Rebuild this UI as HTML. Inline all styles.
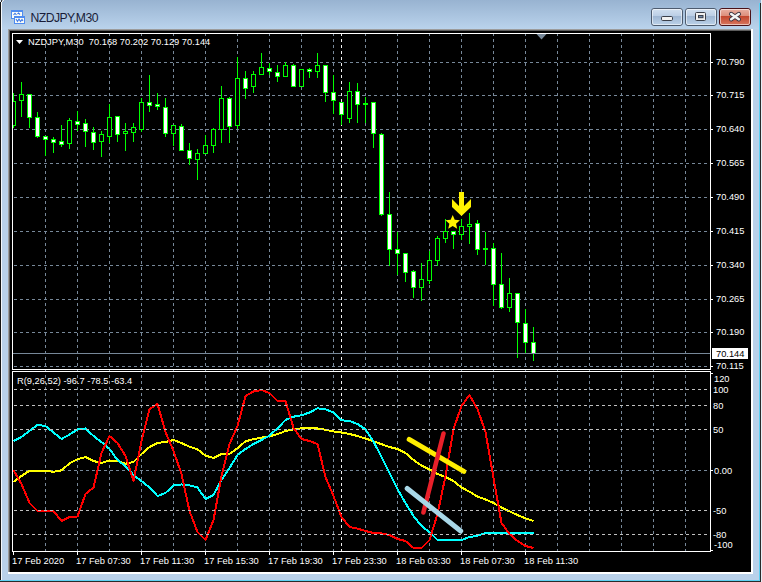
<!DOCTYPE html>
<html><head><meta charset="utf-8"><style>
html,body{margin:0;padding:0;background:#b9d1ea;overflow:hidden;}
svg{display:block;}
</style></head><body>
<svg width="762" height="582" viewBox="0 0 762 582">
<defs>
<linearGradient id="tb" x1="0" y1="0" x2="0" y2="1"><stop offset="0" stop-color="#98b3d1"/><stop offset="1" stop-color="#bad3ec"/></linearGradient>
<linearGradient id="btn" x1="0" y1="0" x2="0" y2="1"><stop offset="0" stop-color="#d3e1f0"/><stop offset="0.42" stop-color="#bccfe6"/><stop offset="0.43" stop-color="#9db5d2"/><stop offset="1" stop-color="#bdd3ea"/></linearGradient>
<linearGradient id="cbtn" x1="0" y1="0" x2="0" y2="1"><stop offset="0" stop-color="#eab3a6"/><stop offset="0.42" stop-color="#dd8f7c"/><stop offset="0.43" stop-color="#c1432a"/><stop offset="1" stop-color="#d97a62"/></linearGradient>
<clipPath id="cmain"><rect x="13" y="34" width="697" height="335"/></clipPath>
<clipPath id="csub"><rect x="13" y="372" width="697" height="179"/></clipPath>
</defs>
<rect x="0" y="0" width="762" height="582" fill="#b9d1ea" />
<rect x="0" y="0" width="762" height="29" fill="url(#tb)" />
<rect x="0" y="2" width="1" height="580" fill="#151515" />
<rect x="1" y="2" width="1" height="578" fill="#f4f8fc" />
<rect x="0" y="0" width="1" height="2" fill="#d4e4f4" />
<rect x="1" y="0" width="1" height="2" fill="#3a3a3a" />
<rect x="2" y="1" width="1" height="1" fill="#e8eef6" />
<rect x="3" y="0" width="1" height="1" fill="#e8e4e0" />
<rect x="760" y="3" width="1" height="579" fill="#2a2a2a" />
<rect x="759" y="3" width="1" height="577" fill="#5ed0f2" />
<rect x="761" y="0" width="1" height="582" fill="#e8eef6" />
<rect x="0" y="580" width="760" height="1" fill="#5ed0f2" />
<rect x="0" y="581" width="761" height="1" fill="#2a2a2a" />
<rect x="8" y="29" width="745" height="1" fill="#9c9c9c" />
<rect x="8" y="29" width="1" height="545" fill="#9c9c9c" />
<rect x="9" y="30" width="742" height="1" fill="#5c5c5c" />
<rect x="9" y="30" width="1" height="542" fill="#5c5c5c" />
<rect x="751" y="29" width="2" height="545" fill="#ffffff" />
<rect x="8" y="572" width="745" height="2" fill="#ffffff" />
<rect x="10" y="31" width="741" height="541" fill="#000000" />
<g shape-rendering="crispEdges">
<rect x="11" y="10" width="12" height="9" fill="#4f8cf0" />
<rect x="12" y="12" width="10" height="6" fill="#fdfdf6" />
<rect x="14" y="16" width="11" height="8" fill="#4f8cf0" />
<rect x="15" y="18" width="9" height="5" fill="#fdfdf6" />
</g>
<path d="M13.5 15 L15 13.3 L16.5 15 M17.5 14 L18.5 13 L20 14.5" stroke="#3f7ae8" fill="none" stroke-width="1.1"/>
<path d="M16 19 L17.5 21.5 L19 19 L20.5 21.5 L22 19.5 L23 21" stroke="#3f7ae8" fill="none" stroke-width="1.1"/>
<text x="30.5" y="21.8" font-family="'Liberation Sans', sans-serif" font-size="12.2" letter-spacing="-0.55" fill="#181c38">NZDJPY,M30</text>
<rect x="651.5" y="8.5" width="31" height="17" rx="2.5" fill="url(#btn)" stroke="#4d5b6e" stroke-width="1"/>
<rect x="652.5" y="9.5" width="29" height="15" rx="1.5" fill="none" stroke="rgba(255,255,255,0.55)" stroke-width="1"/>
<rect x="685.5" y="8.5" width="31" height="17" rx="2.5" fill="url(#btn)" stroke="#4d5b6e" stroke-width="1"/>
<rect x="686.5" y="9.5" width="29" height="15" rx="1.5" fill="none" stroke="rgba(255,255,255,0.55)" stroke-width="1"/>
<rect x="719.5" y="8.5" width="31" height="17" rx="2.5" fill="url(#cbtn)" stroke="#4a1218" stroke-width="1"/>
<rect x="720.5" y="9.5" width="29" height="15" rx="1.5" fill="none" stroke="rgba(255,255,255,0.55)" stroke-width="1"/>
<rect x="661.5" y="16.5" width="11" height="4" rx="1.2" fill="#f2f2f2" stroke="#3a3f4a" stroke-width="1"/>
<rect x="695.5" y="12.5" width="10" height="8" rx="1" fill="#f0f0f0" stroke="#3a3f4a" stroke-width="1"/>
<rect x="698.5" y="15.5" width="4.5" height="2.2" fill="#6f8aae" stroke="#3a3f4a" stroke-width="1"/>
<path d="M731.2 14 L738.8 19.2 M738.8 14 L731.2 19.2" stroke="#3a3440" stroke-width="4.4" stroke-linecap="round"/>
<path d="M731.2 14 L738.8 19.2 M738.8 14 L731.2 19.2" stroke="#f4f4f4" stroke-width="2.6" stroke-linecap="round"/>
<g shape-rendering="crispEdges">
<line x1="45.5" y1="369" x2="45.5" y2="551" stroke="#778899" stroke-dasharray="3 3"/>
<line x1="45.5" y1="33" x2="45.5" y2="369" stroke="#778899" stroke-dasharray="3 3"/>
<line x1="77.5" y1="369" x2="77.5" y2="551" stroke="#778899" stroke-dasharray="3 3"/>
<line x1="77.5" y1="33" x2="77.5" y2="369" stroke="#778899" stroke-dasharray="3 3"/>
<line x1="109.5" y1="369" x2="109.5" y2="551" stroke="#778899" stroke-dasharray="3 3"/>
<line x1="109.5" y1="33" x2="109.5" y2="369" stroke="#778899" stroke-dasharray="3 3"/>
<line x1="141.5" y1="369" x2="141.5" y2="551" stroke="#778899" stroke-dasharray="3 3"/>
<line x1="141.5" y1="33" x2="141.5" y2="369" stroke="#778899" stroke-dasharray="3 3"/>
<line x1="173.5" y1="369" x2="173.5" y2="551" stroke="#778899" stroke-dasharray="3 3"/>
<line x1="173.5" y1="33" x2="173.5" y2="369" stroke="#778899" stroke-dasharray="3 3"/>
<line x1="205.5" y1="369" x2="205.5" y2="551" stroke="#778899" stroke-dasharray="3 3"/>
<line x1="205.5" y1="33" x2="205.5" y2="369" stroke="#778899" stroke-dasharray="3 3"/>
<line x1="237.5" y1="369" x2="237.5" y2="551" stroke="#778899" stroke-dasharray="3 3"/>
<line x1="237.5" y1="33" x2="237.5" y2="369" stroke="#778899" stroke-dasharray="3 3"/>
<line x1="269.5" y1="369" x2="269.5" y2="551" stroke="#778899" stroke-dasharray="3 3"/>
<line x1="269.5" y1="33" x2="269.5" y2="369" stroke="#778899" stroke-dasharray="3 3"/>
<line x1="301.5" y1="369" x2="301.5" y2="551" stroke="#778899" stroke-dasharray="3 3"/>
<line x1="301.5" y1="33" x2="301.5" y2="369" stroke="#778899" stroke-dasharray="3 3"/>
<line x1="333.5" y1="369" x2="333.5" y2="551" stroke="#778899" stroke-dasharray="3 3"/>
<line x1="333.5" y1="33" x2="333.5" y2="369" stroke="#778899" stroke-dasharray="3 3"/>
<line x1="365.5" y1="369" x2="365.5" y2="551" stroke="#778899" stroke-dasharray="3 3"/>
<line x1="365.5" y1="33" x2="365.5" y2="369" stroke="#778899" stroke-dasharray="3 3"/>
<line x1="397.5" y1="369" x2="397.5" y2="551" stroke="#778899" stroke-dasharray="3 3"/>
<line x1="397.5" y1="33" x2="397.5" y2="369" stroke="#778899" stroke-dasharray="3 3"/>
<line x1="429.5" y1="369" x2="429.5" y2="551" stroke="#778899" stroke-dasharray="3 3"/>
<line x1="429.5" y1="33" x2="429.5" y2="369" stroke="#778899" stroke-dasharray="3 3"/>
<line x1="461.5" y1="369" x2="461.5" y2="551" stroke="#778899" stroke-dasharray="3 3"/>
<line x1="461.5" y1="33" x2="461.5" y2="369" stroke="#778899" stroke-dasharray="3 3"/>
<line x1="493.5" y1="369" x2="493.5" y2="551" stroke="#778899" stroke-dasharray="3 3"/>
<line x1="493.5" y1="33" x2="493.5" y2="369" stroke="#778899" stroke-dasharray="3 3"/>
<line x1="525.5" y1="369" x2="525.5" y2="551" stroke="#778899" stroke-dasharray="3 3"/>
<line x1="525.5" y1="33" x2="525.5" y2="369" stroke="#778899" stroke-dasharray="3 3"/>
<line x1="557.5" y1="369" x2="557.5" y2="551" stroke="#778899" stroke-dasharray="3 3"/>
<line x1="557.5" y1="33" x2="557.5" y2="369" stroke="#778899" stroke-dasharray="3 3"/>
<line x1="589.5" y1="369" x2="589.5" y2="551" stroke="#778899" stroke-dasharray="3 3"/>
<line x1="589.5" y1="33" x2="589.5" y2="369" stroke="#778899" stroke-dasharray="3 3"/>
<line x1="621.5" y1="369" x2="621.5" y2="551" stroke="#778899" stroke-dasharray="3 3"/>
<line x1="621.5" y1="33" x2="621.5" y2="369" stroke="#778899" stroke-dasharray="3 3"/>
<line x1="653.5" y1="369" x2="653.5" y2="551" stroke="#778899" stroke-dasharray="3 3"/>
<line x1="653.5" y1="33" x2="653.5" y2="369" stroke="#778899" stroke-dasharray="3 3"/>
<line x1="685.5" y1="369" x2="685.5" y2="551" stroke="#778899" stroke-dasharray="3 3"/>
<line x1="685.5" y1="33" x2="685.5" y2="369" stroke="#778899" stroke-dasharray="3 3"/>
<line x1="14" y1="62.5" x2="710" y2="62.5" stroke="#778899" stroke-dasharray="3 3"/>
<line x1="14" y1="95.5" x2="710" y2="95.5" stroke="#778899" stroke-dasharray="3 3"/>
<line x1="14" y1="129.5" x2="710" y2="129.5" stroke="#778899" stroke-dasharray="3 3"/>
<line x1="14" y1="163.5" x2="710" y2="163.5" stroke="#778899" stroke-dasharray="3 3"/>
<line x1="14" y1="197.5" x2="710" y2="197.5" stroke="#778899" stroke-dasharray="3 3"/>
<line x1="14" y1="231.5" x2="710" y2="231.5" stroke="#778899" stroke-dasharray="3 3"/>
<line x1="14" y1="265.5" x2="710" y2="265.5" stroke="#778899" stroke-dasharray="3 3"/>
<line x1="14" y1="299.5" x2="710" y2="299.5" stroke="#778899" stroke-dasharray="3 3"/>
<line x1="14" y1="332.5" x2="710" y2="332.5" stroke="#778899" stroke-dasharray="3 3"/>
<line x1="14" y1="366.5" x2="710" y2="366.5" stroke="#778899" stroke-dasharray="3 3"/>
<line x1="341.5" y1="33" x2="341.5" y2="369" stroke="#f0f0f0" stroke-dasharray="3 3"/>
<line x1="341.5" y1="369" x2="341.5" y2="551" stroke="#f0f0f0" stroke-dasharray="3 3"/>
<line x1="14" y1="470.5" x2="710" y2="470.5" stroke="#778899" stroke-dasharray="3 3"/>
</g>
<g clip-path="url(#cmain)" shape-rendering="crispEdges">
<rect x="13" y="93" width="1" height="35" fill="#00ff00" />
<rect x="11" y="101" width="5" height="25" fill="#00ff00" />
<rect x="12" y="102" width="3" height="23" fill="#000000" />
<rect x="21" y="82" width="1" height="35" fill="#00ff00" />
<rect x="19" y="94" width="5" height="7" fill="#00ff00" />
<rect x="20" y="95" width="3" height="5" fill="#000000" />
<rect x="29" y="94" width="1" height="34" fill="#00ff00" />
<rect x="27" y="94" width="5" height="24" fill="#00ff00" />
<rect x="28" y="95" width="3" height="22" fill="#ffffff" />
<rect x="37" y="112" width="1" height="26" fill="#00ff00" />
<rect x="35" y="117" width="5" height="20" fill="#00ff00" />
<rect x="36" y="118" width="3" height="18" fill="#ffffff" />
<rect x="45" y="136" width="1" height="20" fill="#00ff00" />
<rect x="43" y="136" width="5" height="4" fill="#00ff00" />
<rect x="44" y="137" width="3" height="2" fill="#ffffff" />
<rect x="53" y="137" width="1" height="16" fill="#00ff00" />
<rect x="51" y="139" width="5" height="4" fill="#00ff00" />
<rect x="52" y="140" width="3" height="2" fill="#ffffff" />
<rect x="61" y="125" width="1" height="22" fill="#00ff00" />
<rect x="59" y="141" width="5" height="4" fill="#00ff00" />
<rect x="60" y="142" width="3" height="2" fill="#ffffff" />
<rect x="69" y="118" width="1" height="31" fill="#00ff00" />
<rect x="67" y="120" width="5" height="24" fill="#00ff00" />
<rect x="68" y="121" width="3" height="22" fill="#000000" />
<rect x="77" y="111" width="1" height="20" fill="#00ff00" />
<rect x="75" y="121" width="5" height="4" fill="#00ff00" />
<rect x="76" y="122" width="3" height="2" fill="#ffffff" />
<rect x="85" y="119" width="1" height="28" fill="#00ff00" />
<rect x="83" y="123" width="5" height="9" fill="#00ff00" />
<rect x="84" y="124" width="3" height="7" fill="#ffffff" />
<rect x="93" y="127" width="1" height="23" fill="#00ff00" />
<rect x="91" y="132" width="5" height="11" fill="#00ff00" />
<rect x="92" y="133" width="3" height="9" fill="#ffffff" />
<rect x="101" y="131" width="1" height="26" fill="#00ff00" />
<rect x="99" y="134" width="5" height="8" fill="#00ff00" />
<rect x="100" y="135" width="3" height="6" fill="#000000" />
<rect x="109" y="104" width="1" height="39" fill="#00ff00" />
<rect x="107" y="117" width="5" height="20" fill="#00ff00" />
<rect x="108" y="118" width="3" height="18" fill="#000000" />
<rect x="117" y="116" width="1" height="26" fill="#00ff00" />
<rect x="115" y="116" width="5" height="19" fill="#00ff00" />
<rect x="116" y="117" width="3" height="17" fill="#ffffff" />
<rect x="125" y="123" width="1" height="28" fill="#00ff00" />
<rect x="123" y="131" width="5" height="3" fill="#00ff00" />
<rect x="124" y="132" width="3" height="1" fill="#000000" />
<rect x="133" y="123" width="1" height="19" fill="#00ff00" />
<rect x="131" y="127" width="5" height="6" fill="#00ff00" />
<rect x="132" y="128" width="3" height="4" fill="#000000" />
<rect x="141" y="98" width="1" height="34" fill="#00ff00" />
<rect x="139" y="102" width="5" height="28" fill="#00ff00" />
<rect x="140" y="103" width="3" height="26" fill="#000000" />
<rect x="149" y="75" width="1" height="37" fill="#00ff00" />
<rect x="147" y="102" width="5" height="4" fill="#00ff00" />
<rect x="148" y="103" width="3" height="2" fill="#ffffff" />
<rect x="157" y="93" width="1" height="17" fill="#00ff00" />
<rect x="155" y="104" width="5" height="3" fill="#00ff00" />
<rect x="156" y="105" width="3" height="1" fill="#ffffff" />
<rect x="165" y="98" width="1" height="39" fill="#00ff00" />
<rect x="163" y="107" width="5" height="27" fill="#00ff00" />
<rect x="164" y="108" width="3" height="25" fill="#ffffff" />
<rect x="173" y="125" width="1" height="21" fill="#00ff00" />
<rect x="171" y="125" width="5" height="9" fill="#00ff00" />
<rect x="172" y="126" width="3" height="7" fill="#000000" />
<rect x="181" y="124" width="1" height="27" fill="#00ff00" />
<rect x="179" y="126" width="5" height="25" fill="#00ff00" />
<rect x="180" y="127" width="3" height="23" fill="#ffffff" />
<rect x="189" y="143" width="1" height="22" fill="#00ff00" />
<rect x="187" y="150" width="5" height="9" fill="#00ff00" />
<rect x="188" y="151" width="3" height="7" fill="#ffffff" />
<rect x="197" y="149" width="1" height="31" fill="#00ff00" />
<rect x="195" y="153" width="5" height="7" fill="#00ff00" />
<rect x="196" y="154" width="3" height="5" fill="#000000" />
<rect x="205" y="135" width="1" height="19" fill="#00ff00" />
<rect x="203" y="145" width="5" height="9" fill="#00ff00" />
<rect x="204" y="146" width="3" height="7" fill="#000000" />
<rect x="213" y="128" width="1" height="25" fill="#00ff00" />
<rect x="211" y="129" width="5" height="17" fill="#00ff00" />
<rect x="212" y="130" width="3" height="15" fill="#000000" />
<rect x="221" y="86" width="1" height="57" fill="#00ff00" />
<rect x="219" y="98" width="5" height="32" fill="#00ff00" />
<rect x="220" y="99" width="3" height="30" fill="#000000" />
<rect x="229" y="97" width="1" height="46" fill="#00ff00" />
<rect x="227" y="98" width="5" height="29" fill="#00ff00" />
<rect x="228" y="99" width="3" height="27" fill="#ffffff" />
<rect x="237" y="57" width="1" height="72" fill="#00ff00" />
<rect x="235" y="78" width="5" height="48" fill="#00ff00" />
<rect x="236" y="79" width="3" height="46" fill="#000000" />
<rect x="245" y="71" width="1" height="28" fill="#00ff00" />
<rect x="243" y="78" width="5" height="11" fill="#00ff00" />
<rect x="244" y="79" width="3" height="9" fill="#ffffff" />
<rect x="253" y="71" width="1" height="22" fill="#00ff00" />
<rect x="251" y="74" width="5" height="13" fill="#00ff00" />
<rect x="252" y="75" width="3" height="11" fill="#000000" />
<rect x="261" y="53" width="1" height="22" fill="#00ff00" />
<rect x="259" y="67" width="5" height="8" fill="#00ff00" />
<rect x="260" y="68" width="3" height="6" fill="#000000" />
<rect x="269" y="63" width="1" height="12" fill="#00ff00" />
<rect x="267" y="68" width="5" height="4" fill="#00ff00" />
<rect x="268" y="69" width="3" height="2" fill="#ffffff" />
<rect x="277" y="65" width="1" height="17" fill="#00ff00" />
<rect x="275" y="72" width="5" height="5" fill="#00ff00" />
<rect x="276" y="73" width="3" height="3" fill="#ffffff" />
<rect x="285" y="62" width="1" height="15" fill="#00ff00" />
<rect x="283" y="65" width="5" height="12" fill="#00ff00" />
<rect x="284" y="66" width="3" height="10" fill="#000000" />
<rect x="293" y="64" width="1" height="23" fill="#00ff00" />
<rect x="291" y="65" width="5" height="22" fill="#00ff00" />
<rect x="292" y="66" width="3" height="20" fill="#ffffff" />
<rect x="301" y="69" width="1" height="18" fill="#00ff00" />
<rect x="299" y="69" width="5" height="18" fill="#00ff00" />
<rect x="300" y="70" width="3" height="16" fill="#000000" />
<rect x="309" y="68" width="1" height="10" fill="#00ff00" />
<rect x="307" y="69" width="5" height="3" fill="#00ff00" />
<rect x="308" y="70" width="3" height="1" fill="#ffffff" />
<rect x="317" y="53" width="1" height="25" fill="#00ff00" />
<rect x="315" y="65" width="5" height="7" fill="#00ff00" />
<rect x="316" y="66" width="3" height="5" fill="#000000" />
<rect x="325" y="65" width="1" height="37" fill="#00ff00" />
<rect x="323" y="65" width="5" height="28" fill="#00ff00" />
<rect x="324" y="66" width="3" height="26" fill="#ffffff" />
<rect x="333" y="75" width="1" height="39" fill="#00ff00" />
<rect x="331" y="92" width="5" height="9" fill="#00ff00" />
<rect x="332" y="93" width="3" height="7" fill="#ffffff" />
<rect x="341" y="102" width="1" height="23" fill="#00ff00" />
<rect x="339" y="102" width="5" height="13" fill="#00ff00" />
<rect x="340" y="103" width="3" height="11" fill="#ffffff" />
<rect x="349" y="82" width="1" height="41" fill="#00ff00" />
<rect x="347" y="91" width="5" height="28" fill="#00ff00" />
<rect x="348" y="92" width="3" height="26" fill="#000000" />
<rect x="357" y="83" width="1" height="40" fill="#00ff00" />
<rect x="355" y="91" width="5" height="14" fill="#00ff00" />
<rect x="356" y="92" width="3" height="12" fill="#ffffff" />
<rect x="365" y="97" width="1" height="26" fill="#00ff00" />
<rect x="363" y="103" width="5" height="2" fill="#00ff00" />
<rect x="373" y="102" width="1" height="46" fill="#00ff00" />
<rect x="371" y="102" width="5" height="32" fill="#00ff00" />
<rect x="372" y="103" width="3" height="30" fill="#ffffff" />
<rect x="381" y="133" width="1" height="83" fill="#00ff00" />
<rect x="379" y="134" width="5" height="81" fill="#00ff00" />
<rect x="380" y="135" width="3" height="79" fill="#ffffff" />
<rect x="389" y="192" width="1" height="74" fill="#00ff00" />
<rect x="387" y="214" width="5" height="36" fill="#00ff00" />
<rect x="388" y="215" width="3" height="34" fill="#ffffff" />
<rect x="397" y="232" width="1" height="43" fill="#00ff00" />
<rect x="395" y="249" width="5" height="5" fill="#00ff00" />
<rect x="396" y="250" width="3" height="3" fill="#ffffff" />
<rect x="405" y="253" width="1" height="29" fill="#00ff00" />
<rect x="403" y="253" width="5" height="20" fill="#00ff00" />
<rect x="404" y="254" width="3" height="18" fill="#ffffff" />
<rect x="413" y="270" width="1" height="28" fill="#00ff00" />
<rect x="411" y="271" width="5" height="17" fill="#00ff00" />
<rect x="412" y="272" width="3" height="15" fill="#ffffff" />
<rect x="421" y="263" width="1" height="38" fill="#00ff00" />
<rect x="419" y="279" width="5" height="9" fill="#00ff00" />
<rect x="420" y="280" width="3" height="7" fill="#000000" />
<rect x="429" y="251" width="1" height="33" fill="#00ff00" />
<rect x="427" y="260" width="5" height="21" fill="#00ff00" />
<rect x="428" y="261" width="3" height="19" fill="#000000" />
<rect x="437" y="236" width="1" height="30" fill="#00ff00" />
<rect x="435" y="238" width="5" height="23" fill="#00ff00" />
<rect x="436" y="239" width="3" height="21" fill="#000000" />
<rect x="445" y="219" width="1" height="24" fill="#00ff00" />
<rect x="443" y="231" width="5" height="8" fill="#00ff00" />
<rect x="444" y="232" width="3" height="6" fill="#000000" />
<rect x="453" y="231" width="1" height="18" fill="#00ff00" />
<rect x="451" y="231" width="5" height="4" fill="#00ff00" />
<rect x="452" y="232" width="3" height="2" fill="#ffffff" />
<rect x="461" y="219" width="1" height="21" fill="#00ff00" />
<rect x="459" y="226" width="5" height="9" fill="#00ff00" />
<rect x="460" y="227" width="3" height="7" fill="#000000" />
<rect x="469" y="213" width="1" height="31" fill="#00ff00" />
<rect x="467" y="224" width="5" height="3" fill="#00ff00" />
<rect x="468" y="225" width="3" height="1" fill="#000000" />
<rect x="477" y="220" width="1" height="35" fill="#00ff00" />
<rect x="475" y="223" width="5" height="27" fill="#00ff00" />
<rect x="476" y="224" width="3" height="25" fill="#ffffff" />
<rect x="485" y="232" width="1" height="33" fill="#00ff00" />
<rect x="483" y="248" width="5" height="2" fill="#00ff00" />
<rect x="493" y="243" width="1" height="63" fill="#00ff00" />
<rect x="491" y="248" width="5" height="37" fill="#00ff00" />
<rect x="492" y="249" width="3" height="35" fill="#ffffff" />
<rect x="501" y="253" width="1" height="56" fill="#00ff00" />
<rect x="499" y="284" width="5" height="24" fill="#00ff00" />
<rect x="500" y="285" width="3" height="22" fill="#ffffff" />
<rect x="509" y="278" width="1" height="34" fill="#00ff00" />
<rect x="507" y="293" width="5" height="15" fill="#00ff00" />
<rect x="508" y="294" width="3" height="13" fill="#000000" />
<rect x="517" y="293" width="1" height="65" fill="#00ff00" />
<rect x="515" y="293" width="5" height="30" fill="#00ff00" />
<rect x="516" y="294" width="3" height="28" fill="#ffffff" />
<rect x="525" y="309" width="1" height="45" fill="#00ff00" />
<rect x="523" y="323" width="5" height="20" fill="#00ff00" />
<rect x="524" y="324" width="3" height="18" fill="#ffffff" />
<rect x="533" y="327" width="1" height="34" fill="#00ff00" />
<rect x="531" y="342" width="5" height="12" fill="#00ff00" />
<rect x="532" y="343" width="3" height="10" fill="#ffffff" />
</g>
<rect x="13" y="353" width="697" height="1" fill="#778899" />
<polygon points="452.70,215.00 454.76,219.77 459.93,220.25 456.03,223.68 457.17,228.75 452.70,226.10 448.23,228.75 449.37,223.68 445.47,220.25 450.64,219.77" fill="#fff200"/>
<polygon points="452,199 459,206 459,192 464,192 464,206 471,199 471,207 461.5,216 452,207" fill="#fff200"/>
<g clip-path="url(#csub)">
<polyline points="13.5,482 21.5,476 29.5,470.7 37.5,470.7 45.5,470.7 53.5,471.8 61.5,470.3 69.5,463.4 77.5,459.3 85.5,457 93.5,461 101.5,463 109.5,460.5 117.5,461 125.5,463.7 133.5,462 141.5,454 149.5,447 157.5,443 165.5,442 173.5,440 181.5,443 189.5,446.8 197.5,449.3 205.5,455.6 213.5,458 221.5,454 229.5,454 237.5,448.2 245.5,441.3 253.5,439.2 261.5,437.7 269.5,436.3 277.5,434.2 285.5,431 293.5,429.3 301.5,428.3 309.5,428 317.5,428.5 325.5,429.8 333.5,431.5 341.5,432.5 349.5,434 357.5,436 365.5,438.5 373.5,441.3 381.5,444.2 389.5,447 397.5,449 405.5,453 413.5,460 421.5,465.5 429.5,469.5 437.5,474 445.5,477 453.5,481 461.5,487.5 469.5,491.7 477.5,496.6 485.5,499.5 493.5,503 501.5,507.5 509.5,511.4 517.5,515 525.5,518.4 533.5,521" fill="none" stroke="#ffff00" stroke-width="2" stroke-linejoin="round" shape-rendering="crispEdges"/>
<polyline points="13.5,441 21.5,437 29.5,431 37.5,425 45.5,426 53.5,432.5 61.5,439 69.5,434.6 77.5,429.5 85.5,428.5 93.5,436 101.5,442 109.5,449 117.5,460 125.5,466 133.5,475 141.5,481 149.5,487.5 157.5,496 165.5,493 173.5,485.4 181.5,484.4 189.5,485.4 197.5,487.5 205.5,499 213.5,495 221.5,480 229.5,468 237.5,455 245.5,449 253.5,444 261.5,440 269.5,435.6 277.5,428.3 285.5,420 293.5,416.7 301.5,415.3 309.5,412.5 317.5,408.3 325.5,409.4 333.5,412.5 341.5,420.3 349.5,421 357.5,424 365.5,429.3 373.5,441.5 381.5,457 389.5,473 397.5,489 405.5,503 413.5,516 421.5,526 429.5,532 437.5,540 445.5,540 453.5,540 461.5,540 469.5,537 477.5,535.8 485.5,533 493.5,533 501.5,533 509.5,533 517.5,533 525.5,533 533.5,533" fill="none" stroke="#00ffff" stroke-width="2" stroke-linejoin="round" shape-rendering="crispEdges"/>
<polyline points="13.5,470 21.5,484 29.5,503 37.5,511 45.5,511 53.5,511 61.5,521 69.5,517 77.5,516.5 85.5,494 93.5,487.5 101.5,453 109.5,436 117.5,443 125.5,456 133.5,481 141.5,441 149.5,409 157.5,404 165.5,432 173.5,451 181.5,474 189.5,511 197.5,532 205.5,540 213.5,520 221.5,476 229.5,444 237.5,426 245.5,396 253.5,391.5 261.5,390 269.5,393 277.5,401 285.5,401 293.5,428 301.5,439 309.5,441 317.5,444 325.5,477 333.5,496 341.5,517 349.5,527 357.5,528.6 365.5,531 373.5,533 381.5,533.5 389.5,535 397.5,539 405.5,541 413.5,548 421.5,548 429.5,540 437.5,514 445.5,476 453.5,429 461.5,406 469.5,395 477.5,409 485.5,432 493.5,478 501.5,523 509.5,534 517.5,541 525.5,546 533.5,548" fill="none" stroke="#ff0000" stroke-width="2" stroke-linejoin="round" shape-rendering="crispEdges"/>
<g shape-rendering="crispEdges">
<line x1="14" y1="389.5" x2="710" y2="389.5" stroke="#c0c0c0" stroke-dasharray="3 3"/>
<line x1="14" y1="405.5" x2="710" y2="405.5" stroke="#c0c0c0" stroke-dasharray="3 3"/>
<line x1="14" y1="429.5" x2="710" y2="429.5" stroke="#c0c0c0" stroke-dasharray="3 3"/>
<line x1="14" y1="510.5" x2="710" y2="510.5" stroke="#c0c0c0" stroke-dasharray="3 3"/>
<line x1="14" y1="534.5" x2="710" y2="534.5" stroke="#c0c0c0" stroke-dasharray="3 3"/>
</g>
<line x1="409.2" y1="439.4" x2="463.8" y2="471.4" stroke="#ffee00" stroke-width="5" stroke-linecap="round"/>
<line x1="443.5" y1="433.5" x2="423.4" y2="512.5" stroke="#e8202a" stroke-width="4.5" stroke-linecap="round"/>
<line x1="407.2" y1="488.5" x2="460.7" y2="531" stroke="#a8d8e8" stroke-width="5" stroke-linecap="round"/>
</g>
<g shape-rendering="crispEdges">
<rect x="12" y="33" width="699" height="1" fill="#ffffff" />
<rect x="12" y="369" width="699" height="1" fill="#ffffff" />
<rect x="12" y="33" width="1" height="337" fill="#ffffff" />
<rect x="710" y="33" width="1" height="337" fill="#ffffff" />
<rect x="12" y="371" width="699" height="1" fill="#ffffff" />
<rect x="12" y="551" width="699" height="1" fill="#ffffff" />
<rect x="12" y="371" width="1" height="181" fill="#ffffff" />
<rect x="710" y="371" width="1" height="181" fill="#ffffff" />
<rect x="711" y="62" width="2" height="1" fill="#ffffff" />
<rect x="711" y="95" width="2" height="1" fill="#ffffff" />
<rect x="711" y="129" width="2" height="1" fill="#ffffff" />
<rect x="711" y="163" width="2" height="1" fill="#ffffff" />
<rect x="711" y="197" width="2" height="1" fill="#ffffff" />
<rect x="711" y="231" width="2" height="1" fill="#ffffff" />
<rect x="711" y="265" width="2" height="1" fill="#ffffff" />
<rect x="711" y="299" width="2" height="1" fill="#ffffff" />
<rect x="711" y="332" width="2" height="1" fill="#ffffff" />
<rect x="711" y="366" width="2" height="1" fill="#ffffff" />
<rect x="711" y="373" width="2" height="1" fill="#ffffff" />
<rect x="711" y="470" width="2" height="1" fill="#ffffff" />
<rect x="711" y="550" width="2" height="1" fill="#ffffff" />
<rect x="13" y="552" width="1" height="3" fill="#ffffff" />
<rect x="77" y="552" width="1" height="3" fill="#ffffff" />
<rect x="141" y="552" width="1" height="3" fill="#ffffff" />
<rect x="205" y="552" width="1" height="3" fill="#ffffff" />
<rect x="269" y="552" width="1" height="3" fill="#ffffff" />
<rect x="333" y="552" width="1" height="3" fill="#ffffff" />
<rect x="397" y="552" width="1" height="3" fill="#ffffff" />
<rect x="461" y="552" width="1" height="3" fill="#ffffff" />
<rect x="525" y="552" width="1" height="3" fill="#ffffff" />
</g>
<polygon points="536.5,34 546.5,34 541.5,39.5" fill="#778899"/>
<polygon points="16,40 23,40 19.5,44" fill="#ffffff"/>
<text x="28" y="44.5" font-family="'Liberation Sans', sans-serif" font-size="9.3" fill="#ffffff" xml:space="preserve">NZDJPY,M30  70.168 70.202 70.129 70.144</text>
<text x="17" y="383.5" font-family="'Liberation Sans', sans-serif" font-size="9.3" fill="#ffffff">R(9,26,52) -96.7 -78.5 -63.4</text>
<text x="716" y="65.4" font-family="'Liberation Sans', sans-serif" font-size="9.3" fill="#ffffff">70.790</text>
<text x="716" y="98.4" font-family="'Liberation Sans', sans-serif" font-size="9.3" fill="#ffffff">70.715</text>
<text x="716" y="132.4" font-family="'Liberation Sans', sans-serif" font-size="9.3" fill="#ffffff">70.640</text>
<text x="716" y="166.4" font-family="'Liberation Sans', sans-serif" font-size="9.3" fill="#ffffff">70.565</text>
<text x="716" y="200.4" font-family="'Liberation Sans', sans-serif" font-size="9.3" fill="#ffffff">70.490</text>
<text x="716" y="234.4" font-family="'Liberation Sans', sans-serif" font-size="9.3" fill="#ffffff">70.415</text>
<text x="716" y="268.4" font-family="'Liberation Sans', sans-serif" font-size="9.3" fill="#ffffff">70.340</text>
<text x="716" y="302.4" font-family="'Liberation Sans', sans-serif" font-size="9.3" fill="#ffffff">70.265</text>
<text x="716" y="335.4" font-family="'Liberation Sans', sans-serif" font-size="9.3" fill="#ffffff">70.190</text>
<text x="716" y="369.4" font-family="'Liberation Sans', sans-serif" font-size="9.3" fill="#ffffff">70.115</text>
<rect x="712" y="348" width="36" height="11" fill="#ffffff" />
<text x="716" y="357" font-family="'Liberation Sans', sans-serif" font-size="9.3" fill="#000000">70.144</text>
<text x="714" y="382" font-family="'Liberation Sans', sans-serif" font-size="9.3" fill="#ffffff">120</text>
<text x="713" y="393" font-family="'Liberation Sans', sans-serif" font-size="9.3" fill="#ffffff">100</text>
<text x="713" y="409" font-family="'Liberation Sans', sans-serif" font-size="9.3" fill="#ffffff">80</text>
<text x="713" y="433" font-family="'Liberation Sans', sans-serif" font-size="9.3" fill="#ffffff">50</text>
<text x="714" y="474" font-family="'Liberation Sans', sans-serif" font-size="9.3" fill="#ffffff">0.00</text>
<text x="713" y="514" font-family="'Liberation Sans', sans-serif" font-size="9.3" fill="#ffffff">-50</text>
<text x="713" y="538" font-family="'Liberation Sans', sans-serif" font-size="9.3" fill="#ffffff">-80</text>
<text x="714" y="548" font-family="'Liberation Sans', sans-serif" font-size="9.3" fill="#ffffff">-100</text>
<text x="12" y="563.6" font-family="'Liberation Sans', sans-serif" font-size="9.3" fill="#ffffff">17 Feb 2020</text>
<text x="76" y="563.6" font-family="'Liberation Sans', sans-serif" font-size="9.3" fill="#ffffff">17 Feb 07:30</text>
<text x="140" y="563.6" font-family="'Liberation Sans', sans-serif" font-size="9.3" fill="#ffffff">17 Feb 11:30</text>
<text x="204" y="563.6" font-family="'Liberation Sans', sans-serif" font-size="9.3" fill="#ffffff">17 Feb 15:30</text>
<text x="268" y="563.6" font-family="'Liberation Sans', sans-serif" font-size="9.3" fill="#ffffff">17 Feb 19:30</text>
<text x="332" y="563.6" font-family="'Liberation Sans', sans-serif" font-size="9.3" fill="#ffffff">17 Feb 23:30</text>
<text x="396" y="563.6" font-family="'Liberation Sans', sans-serif" font-size="9.3" fill="#ffffff">18 Feb 03:30</text>
<text x="460" y="563.6" font-family="'Liberation Sans', sans-serif" font-size="9.3" fill="#ffffff">18 Feb 07:30</text>
<text x="524" y="563.6" font-family="'Liberation Sans', sans-serif" font-size="9.3" fill="#ffffff">18 Feb 11:30</text>
</svg>
</body></html>
